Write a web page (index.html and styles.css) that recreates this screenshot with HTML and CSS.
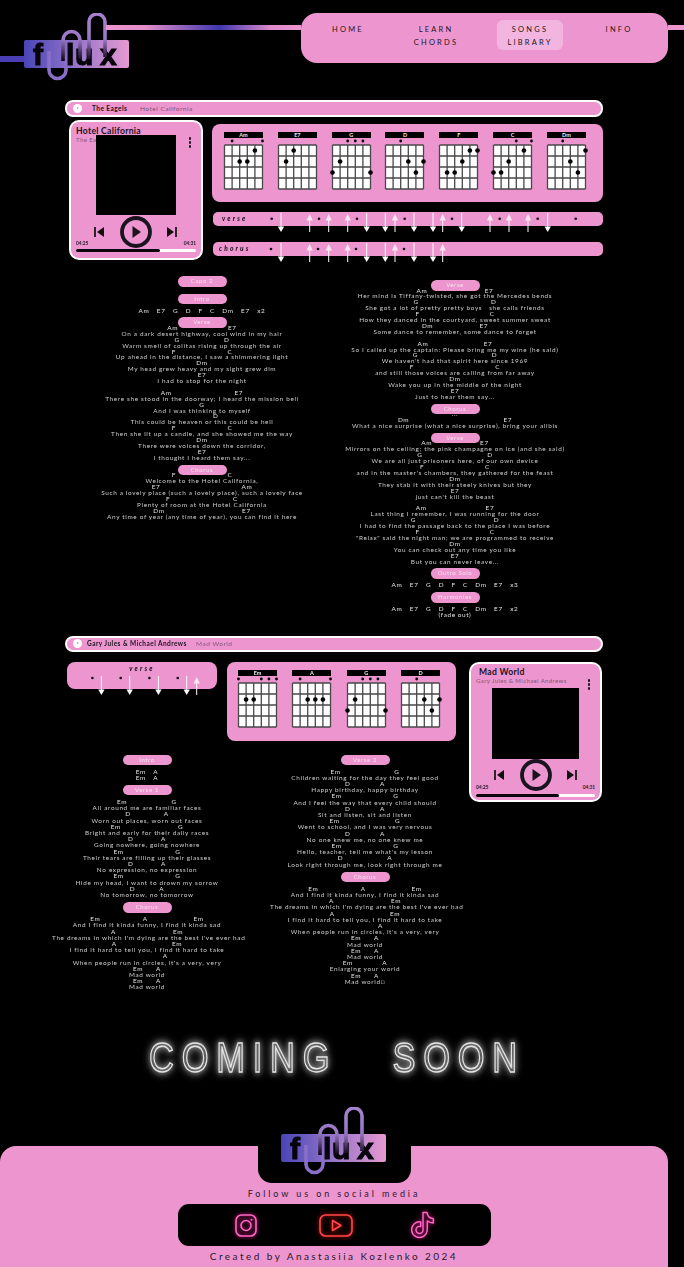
FILE: index.html
```html
<!DOCTYPE html>
<html lang="en">
<head>
<meta charset="utf-8">
<title>Flux – Songs Library</title>
<link rel="stylesheet" href="styles.css">
</head>
<body>
<svg class="sprite" aria-hidden="true">
  <defs>
    <linearGradient id="logoBg" x1="0" x2="1" y1="0" y2="0"><stop offset="0" stop-color="#4a46b8"/><stop offset=".45" stop-color="#8f72c8"/><stop offset="1" stop-color="#e79ad2"/></linearGradient>
    <linearGradient id="tube" gradientUnits="userSpaceOnUse" x1="0" x2="0" y1="0" y2="48"><stop offset="0" stop-color="#a884cf"/><stop offset=".55" stop-color="#9a78c8"/><stop offset="1" stop-color="#0c0614"/></linearGradient>
    <linearGradient id="topLine" x1="0" x2="1" y1="0" y2="0"><stop offset="0" stop-color="#ee96d0"/><stop offset=".2" stop-color="#e48fcb"/><stop offset=".58" stop-color="#4038ae"/><stop offset=".85" stop-color="#e08ccb"/><stop offset="1" stop-color="#ee96d0"/></linearGradient>
    <symbol id="logo" viewBox="0 0 106 70">
      <rect x="0" y="27" width="105" height="28" rx="2" fill="url(#logoBg)"/>
      <path d="M25 38V57a8.5 8.5 0 0 0 17 0V44" fill="none" stroke="#8b70c9" stroke-width="3.6"/>
      <g class="logo-word">
        <text x="9" y="52">f</text>
        <text x="42" y="52">l</text>
        <text x="51" y="52">u</text>
        <text x="76" y="52">x</text>
      </g>
      <path d="M39 48V27a8.5 8.5 0 0 1 17 0V46" fill="none" stroke="url(#tube)" stroke-width="3.6"/>
      <path d="M65 46V9a8 8 0 0 1 16 0V44" fill="none" stroke="url(#tube)" stroke-width="3.6"/>
    </symbol>
    <g id="fretboard">
      <rect x=".5" y="7" width="38" height="44" rx="1" fill="#fff"/>
      <path d="M.5 7H38.500M.5 18H38.500M.5 29H38.500M.5 40H38.500M.5 51H38.500M.5 7V51M8.100 7V51M15.700 7V51M23.300 7V51M30.900 7V51M38.500 7V51" fill="none" stroke="#4a4a4a" stroke-width="1.3"/>
    </g>
    <g id="down"><path d="M0 1V16" stroke="#fff" stroke-width="1"/><path d="M-3.200 14.500H3.200L0 20Z" fill="#fff"/></g>
    <g id="up"><path d="M0 20V7" stroke="#fff" stroke-width="1"/><path d="M-3.200 8.500H3.200L0 2Z" fill="#fbe6f4"/></g>
    <g id="prev"><path d="M1 1V11" stroke="#111" stroke-width="1.700"/><path d="M10 1V11L3 6Z" fill="#111"/></g>
    <g id="next"><path d="M10 1V11" stroke="#111" stroke-width="1.700"/><path d="M1 1V11L8 6Z" fill="#111"/></g>
    <g id="play"><circle cx="17" cy="16" r="14" fill="none" stroke="#1a1520" stroke-width="3.800"/><path d="M13.500 10V22L22 16Z" fill="#1a1520"/></g>
  </defs>
</svg>

<header class="header">
  <span class="stub-left"></span>
  <svg class="logo" viewBox="0 0 106 70"><use href="#logo"/></svg>
  <svg class="connector" viewBox="0 0 195 5" preserveAspectRatio="none" aria-hidden="true"><rect width="195" height="5" fill="url(#topLine)"/></svg>
  <nav class="nav">
    <a class="nav-item nav-home">Home</a>
    <a class="nav-item nav-learn">Learn<br>Chords</a>
    <a class="nav-item nav-songs">Songs<br>Library</a>
    <a class="nav-item nav-info">Info</a>
  </nav>
  <span class="stub-right"></span>
</header>

<main class="main">
  <section class="song">
    <div class="song-bar">
      <span class="bar-play"></span>
      <b class="bar-artist bar-artist--eagles">The Eagels</b>
      <span class="bar-title">Hotel California</span>
    </div>
    <div class="song-top">
      <article class="player">
        <h3 class="player-title">Hotel California</h3>
        <p class="player-sub">The Eagles</p>
        <div class="album"></div>
        <span class="kebab"><i></i><i></i><i></i></span>
        <div class="controls">
          <svg class="ctl" viewBox="0 0 12 12"><use href="#prev"/></svg>
          <svg class="ctl-play" viewBox="0 0 34 32"><use href="#play"/></svg>
          <svg class="ctl" viewBox="0 0 12 12"><use href="#next"/></svg>
        </div>
        <div class="times"><span>04:25</span><span>04:31</span></div>
        <div class="progress"><span class="progress-fill"></span></div>
      </article>
      <div class="song-side">
        <div class="chords">
          <figure class="chord"><figcaption>Am</figcaption><svg viewBox="0 0 39 58"><use href="#fretboard"/><circle class="o" cx="8.100" cy="3"/><circle class="o" cx="38.500" cy="3"/><circle class="d" cx="30.900" cy="12.500"/><circle class="d" cx="15.700" cy="23.500"/><circle class="d" cx="23.300" cy="23.500"/></svg></figure>
          <figure class="chord"><figcaption>E7</figcaption><svg viewBox="0 0 39 58"><use href="#fretboard"/><circle class="d" cx="15.700" cy="12.500"/><circle class="d" cx="8.100" cy="23.500"/></svg></figure>
          <figure class="chord"><figcaption>G</figcaption><svg viewBox="0 0 39 58"><use href="#fretboard"/><circle class="o" cx="15.700" cy="3"/><circle class="o" cx="23.300" cy="3"/><circle class="o" cx="30.900" cy="3"/><circle class="d" cx="8.100" cy="23.500"/><circle class="d" cx=".5" cy="34.500"/><circle class="d" cx="38.500" cy="34.500"/></svg></figure>
          <figure class="chord"><figcaption>D</figcaption><svg viewBox="0 0 39 58"><use href="#fretboard"/><circle class="o" cx="15.700" cy="3"/><circle class="d" cx="23.300" cy="23.500"/><circle class="d" cx="38.500" cy="23.500"/><circle class="d" cx="30.900" cy="34.500"/></svg></figure>
          <figure class="chord"><figcaption>F</figcaption><svg viewBox="0 0 39 58"><use href="#fretboard"/><circle class="d" cx="30.900" cy="12.500"/><circle class="d" cx="38.500" cy="12.500"/><circle class="d" cx="23.300" cy="23.500"/><circle class="d" cx="8.100" cy="34.500"/><circle class="d" cx="15.700" cy="34.500"/></svg></figure>
          <figure class="chord"><figcaption>C</figcaption><svg viewBox="0 0 39 58"><use href="#fretboard"/><circle class="o" cx="23.300" cy="3"/><circle class="o" cx="38.500" cy="3"/><circle class="d" cx="30.900" cy="12.500"/><circle class="d" cx="15.700" cy="23.500"/><circle class="d" cx=".5" cy="34.500"/><circle class="d" cx="8.100" cy="34.500"/></svg></figure>
          <figure class="chord"><figcaption>Dm</figcaption><svg viewBox="0 0 39 58"><use href="#fretboard"/><circle class="o" cx="15.700" cy="3"/><circle class="d" cx="38.500" cy="12.500"/><circle class="d" cx="23.300" cy="23.500"/><circle class="d" cx="30.900" cy="34.500"/></svg></figure>
        </div>
        <div class="strum strum--verse">
          <span class="strum-label">verse</span>
          <svg class="strum-marks" viewBox="0 0 340 14">
            <circle class="s" cx="8.700" cy="6.700"/><circle class="s" cx="56" cy="6.700"/><circle class="s" cx="94" cy="6.700"/><circle class="s" cx="141.700" cy="6.700"/><circle class="s" cx="189" cy="6.700"/><circle class="s" cx="236.700" cy="6.700"/><circle class="s" cx="274.700" cy="6.700"/><circle class="s" cx="312.700" cy="6.700"/>
            <use href="#down" x="18"/><use href="#down" x="103.700"/><use href="#down" x="122.300"/><use href="#down" x="151"/><use href="#down" x="170"/><use href="#down" x="198.700"/><use href="#down" x="284.700"/>
            <use href="#up" x="46.700"/><use href="#up" x="65.700"/><use href="#up" x="84.700"/><use href="#up" x="132"/><use href="#up" x="179.700"/><use href="#up" x="227"/><use href="#up" x="246"/><use href="#up" x="265"/>
          </svg>
        </div>
        <div class="strum strum--chorus">
          <span class="strum-label">chorus</span>
          <svg class="strum-marks" viewBox="0 0 340 14">
            <circle class="s" cx="8" cy="7"/><circle class="s" cx="55" cy="7"/><circle class="s" cx="93" cy="7"/><circle class="s" cx="141" cy="7"/>
            <use href="#down" x="18"/><use href="#down" x="103.700"/><use href="#down" x="122.300"/><use href="#down" x="151"/><use href="#down" x="170"/>
            <use href="#up" x="46.700"/><use href="#up" x="65.700"/><use href="#up" x="84.700"/><use href="#up" x="132"/><use href="#up" x="179.700"/>
          </svg>
        </div>
      </div>
    </div>

    <div class="lyrics lyrics--eagles">
      <div class="col col--e1">
        <p class="pill pill--capo">Capo 2</p>
        <p class="pill pill--roomy">Intro</p>
        <p class="c">Am    E7    G    D    F    C    Dm    E7    x2</p>
        <p class="pill pill--tight">Verse</p>
        <p class="c">Am                           E7</p>
        <p class="l">On a dark desert highway, cool wind in my hair</p>
        <p class="c">G                        D</p>
        <p class="l">Warm smell of colitas rising up through the air</p>
        <p class="c">F                            C</p>
        <p class="l">Up ahead in the distance, I saw a shimmering light</p>
        <p class="c">Dm</p>
        <p class="l">My head grew heavy and my sight grew dim</p>
        <p class="c">E7</p>
        <p class="l">I had to stop for the night</p>
        <p class="blank"></p>
        <p class="c">Am                                  E7</p>
        <p class="l">There she stood in the doorway; I heard the mission bell</p>
        <p class="c">G</p>
        <p class="l">And I was thinking to myself</p>
        <p class="c">               D</p>
        <p class="l">This could be heaven or this could be hell</p>
        <p class="c">F                            C</p>
        <p class="l">Then she lit up a candle, and she showed me the way</p>
        <p class="c">Dm</p>
        <p class="l">There were voices down the corridor,</p>
        <p class="c">E7</p>
        <p class="l">I thought I heard them say...</p>
        <p class="pill pill--tight">Chorus</p>
        <p class="c">F                            C</p>
        <p class="l">Welcome to the Hotel California,</p>
        <p class="c">E7                                            Am</p>
        <p class="l">Such a lovely place (such a lovely place), such a lovely face</p>
        <p class="c">F                                  C</p>
        <p class="l">Plenty of room at the Hotel California</p>
        <p class="c">Dm                                          E7</p>
        <p class="l">Any time of year (any time of year), you can find it here</p>
      </div>
      <div class="col col--e2">
        <p class="pill pill--tight">Verse</p>
        <p class="c">Am                               E7</p>
        <p class="l">Her mind is Tiffany-twisted, she got the Mercedes bends</p>
        <p class="c">G                                       D</p>
        <p class="l">She got a lot of pretty pretty boys   she calls friends</p>
        <p class="c">F                                      C</p>
        <p class="l">How they danced in the courtyard, sweet summer sweat</p>
        <p class="c">Dm                         E7</p>
        <p class="l">Some dance to remember, some dance to forget</p>
        <p class="blank"></p>
        <p class="c">Am                              E7</p>
        <p class="l">So I called up the captain: Please bring me my wine (he said)</p>
        <p class="c">G                                        D</p>
        <p class="l">We haven't had that spirit here since 1969</p>
        <p class="c">F                                            C</p>
        <p class="l">and still those voices are calling from far away</p>
        <p class="c">Dm</p>
        <p class="l">Wake you up in the middle of the night</p>
        <p class="c">E7</p>
        <p class="l">Just to hear them say...</p>
        <p class="pill pill--tight">Chorus</p>
        <p class="c">...</p>
        <p class="c">Dm                                                   E7</p>
        <p class="l">What a nice surprise (what a nice surprise), bring your alibis</p>
        <p class="pill pill--tight">Verse</p>
        <p class="c">Am                          E7</p>
        <p class="l">Mirrors on the ceiling; the pink champagne on ice (and she said)</p>
        <p class="c">G                                   D</p>
        <p class="l">We are all just prisoners here, of our own device</p>
        <p class="c">F                                 C</p>
        <p class="l">and in the master's chambers, they gathered for the feast</p>
        <p class="c">Dm</p>
        <p class="l">They stab it with their steely knives but they</p>
        <p class="c">E7</p>
        <p class="l">just can't kill the beast</p>
        <p class="blank"></p>
        <p class="c">Am                                E7</p>
        <p class="l">Last thing I remember, I was running for the door</p>
        <p class="c">G                                          D</p>
        <p class="l">I had to find the passage back to the place I was before</p>
        <p class="c">F                                      C</p>
        <p class="l">"Relax" said the night man; we are programmed to receive</p>
        <p class="c">Dm</p>
        <p class="l">You can check out any time you like</p>
        <p class="c">E7</p>
        <p class="l">But you can never leave...</p>
        <p class="pill pill--roomy">Outro Solo</p>
        <p class="c">Am    E7    G    D    F    C    Dm    E7    x3</p>
        <p class="pill pill--roomy">Harmonies</p>
        <p class="c">Am    E7    G    D    F    C    Dm    E7    x2</p>
        <p class="c">(fade out)</p>
      </div>
    </div>
  </section>

  <section class="song song--mad">
    <div class="song-bar song-bar--mad">
      <span class="bar-play"></span>
      <b class="bar-artist bar-artist--gary">Gary Jules &amp; Michael Andrews</b>
      <span class="bar-title">Mad World</span>
    </div>
    <div class="mad-row">
      <div class="mad-left">
        <div class="mad-top">
          <div class="strum-card">
            <span class="strum-label strum-label--card">verse</span>
            <svg class="strum-marks strum-marks--card" viewBox="0 0 150 15">
              <circle class="s" cx="25.400" cy="4"/><circle class="s" cx="53.700" cy="4"/><circle class="s" cx="82.400" cy="4"/><circle class="s" cx="110.700" cy="4"/>
              <use href="#down" x="34.400" y="1"/><use href="#down" x="62.700" y="1"/><use href="#down" x="91.400" y="1"/><use href="#down" x="119.700" y="1"/><use href="#up" x="129.700" y="1"/>
            </svg>
          </div>
          <div class="chords chords--mad">
            <figure class="chord"><figcaption>Em</figcaption><svg viewBox="0 0 39 58"><use href="#fretboard"/><circle class="o" cx=".5" cy="3"/><circle class="o" cx="23.300" cy="3"/><circle class="o" cx="30.900" cy="3"/><circle class="o" cx="38.500" cy="3"/><circle class="d" cx="8.100" cy="23.500"/><circle class="d" cx="15.700" cy="23.500"/></svg></figure>
            <figure class="chord"><figcaption>A</figcaption><svg viewBox="0 0 39 58"><use href="#fretboard"/><circle class="o" cx="8.100" cy="3"/><circle class="o" cx="38.500" cy="3"/><circle class="d" cx="15.700" cy="23.500"/><circle class="d" cx="23.300" cy="23.500"/><circle class="d" cx="30.900" cy="23.500"/></svg></figure>
            <figure class="chord"><figcaption>G</figcaption><svg viewBox="0 0 39 58"><use href="#fretboard"/><circle class="o" cx="15.700" cy="3"/><circle class="o" cx="23.300" cy="3"/><circle class="o" cx="30.900" cy="3"/><circle class="d" cx="8.100" cy="23.500"/><circle class="d" cx=".5" cy="34.500"/><circle class="d" cx="38.500" cy="34.500"/></svg></figure>
            <figure class="chord"><figcaption>D</figcaption><svg viewBox="0 0 39 58"><use href="#fretboard"/><circle class="o" cx="15.700" cy="3"/><circle class="d" cx="23.300" cy="23.500"/><circle class="d" cx="38.500" cy="23.500"/><circle class="d" cx="30.900" cy="34.500"/></svg></figure>
          </div>
        </div>
        <div class="lyrics lyrics--mad">
          <div class="col col--m1">
            <p class="pill pill--roomy">Intro</p>
            <p class="c">Em    A</p>
            <p class="c">Em    A</p>
            <p class="pill pill--roomy">Verse 1</p>
            <p class="c">Em                        G</p>
            <p class="l">All around me are familiar faces</p>
            <p class="c">D                  A</p>
            <p class="l">Worn out places, worn out faces</p>
            <p class="c">Em                               G</p>
            <p class="l">Bright and early for their daily races</p>
            <p class="c">D               A</p>
            <p class="l">Going nowhere, going nowhere</p>
            <p class="c">Em                            G</p>
            <p class="l">Their tears are filling up their glasses</p>
            <p class="c">D               A</p>
            <p class="l">No expression, no expression</p>
            <p class="c">Em                            G</p>
            <p class="l">Hide my head, I want to drown my sorrow</p>
            <p class="c">D             A</p>
            <p class="l">No tomorrow, no tomorrow</p>
            <p class="pill pill--roomy">Chorus</p>
            <p class="c">Em                       A                         Em</p>
            <p class="l">And I find it kinda funny, I find it kinda sad</p>
            <p class="c">A                               Em</p>
            <p class="l">The dreams in which I'm dying are the best I've ever had</p>
            <p class="c">A                              Em</p>
            <p class="l">I find it hard to tell you, I find it hard to take</p>
            <p class="c">                    A</p>
            <p class="l">When people run in circles, it's a very, very</p>
            <p class="c">Em       A</p>
            <p class="l">Mad world</p>
            <p class="c">Em       A</p>
            <p class="l">Mad world</p>
          </div>
          <div class="col col--m2">
            <p class="pill pill--roomy">Verse 2</p>
            <p class="c">Em                             G</p>
            <p class="l">Children waiting for the day they feel good</p>
            <p class="c">D                A</p>
            <p class="l">Happy birthday, happy birthday</p>
            <p class="c">Em                            G</p>
            <p class="l">And I feel the way that every child should</p>
            <p class="c">D                A</p>
            <p class="l">Sit and listen, sit and listen</p>
            <p class="c">Em                              G</p>
            <p class="l">Went to school, and I was very nervous</p>
            <p class="c">D                A</p>
            <p class="l">No one knew me, no one knew me</p>
            <p class="c">Em                            G</p>
            <p class="l">Hello, teacher, tell me what's my lesson</p>
            <p class="c">D                        A</p>
            <p class="l">Look right through me, look right through me</p>
            <p class="pill pill--roomy">Chorus</p>
            <p class="c">Em                       A                         Em</p>
            <p class="l">And I find it kinda funny, I find it kinda sad</p>
            <p class="c">A                               Em</p>
            <p class="l">The dreams in which I'm dying are the best I've ever had</p>
            <p class="c">A                              Em</p>
            <p class="l">I find it hard to tell you, I find it hard to take</p>
            <p class="c">                 A</p>
            <p class="l">When people run in circles, it's a very, very</p>
            <p class="c">Em       A</p>
            <p class="l">Mad world</p>
            <p class="c">Em       A</p>
            <p class="l">Mad world</p>
            <p class="c">Em                A</p>
            <p class="l">Enlarging your world</p>
            <p class="c">Em       A</p>
            <p class="l">Mad world&#9633;</p>
          </div>
        </div>
      </div>
      <article class="player player--mad">
        <h3 class="player-title">Mad World</h3>
        <p class="player-sub">Gary Jules &amp; Michael Andrews</p>
        <div class="album"></div>
        <span class="kebab"><i></i><i></i><i></i></span>
        <div class="controls">
          <svg class="ctl" viewBox="0 0 12 12"><use href="#prev"/></svg>
          <svg class="ctl-play" viewBox="0 0 34 32"><use href="#play"/></svg>
          <svg class="ctl" viewBox="0 0 12 12"><use href="#next"/></svg>
        </div>
        <div class="times"><span>04:25</span><span>04:31</span></div>
        <div class="progress"><span class="progress-fill"></span></div>
      </article>
    </div>
  </section>

  <h2 class="coming">COMING SOON</h2>
</main>

<footer class="footer">
  <div class="notch"><svg class="logo logo--footer" viewBox="0 0 106 70"><use href="#logo"/></svg></div>
  <p class="follow">Follow us on social media</p>
  <div class="social">
    <svg class="ic ic-insta" viewBox="0 0 24 25"><rect x="2" y="2" width="20" height="21" rx="5.500"/><circle cx="12" cy="12.500" r="5"/><circle class="ic-dot" cx="17.500" cy="6.800" r="1"/></svg>
    <svg class="ic ic-yt" viewBox="0 0 36 25"><rect x="2" y="2" width="32" height="21" rx="5.500"/><path d="M14.500 7.500V17.500L23 12.500Z"/></svg>
    <svg class="ic ic-tt" viewBox="-1 -1 26 26"><path d="M12.525.02c1.31-.02 2.61-.01 3.91-.02.08 1.53.63 3.09 1.75 4.17 1.12 1.11 2.7 1.62 4.24 1.79v4.03c-1.44-.05-2.89-.35-4.2-.97-.57-.26-1.1-.59-1.62-.93-.01 2.92.01 5.84-.02 8.75-.08 1.4-.54 2.79-1.35 3.94-1.31 1.92-3.58 3.17-5.91 3.21-1.43.08-2.86-.31-4.08-1.03-2.02-1.19-3.44-3.37-3.65-5.71-.02-.5-.03-1-.01-1.49.18-1.9 1.12-3.72 2.58-4.96 1.66-1.44 3.98-2.13 6.15-1.72.02 1.48-.04 2.96-.04 4.44-.99-.32-2.15-.23-3.02.37-.63.41-1.11 1.04-1.36 1.75-.21.51-.15 1.07-.14 1.61.24 1.64 1.82 3.02 3.5 2.87 1.12-.01 2.19-.66 2.77-1.61.19-.33.4-.67.41-1.06.1-1.79.06-3.57.07-5.36.01-4.03-.01-8.05.02-12.07z"/></svg>
  </div>
  <p class="credit">Created by Anastasiia Kozlenko 2024</p>
</footer>
</body>
</html>
```
FILE: styles.css
```css
* { box-sizing: border-box; margin: 0; padding: 0; }
:root { --pink: #ee96d0; --ink: #1b1420; --mute: #7d5a78; }
html, body { background: #000; }
body { width: 684px; height: 1267px; overflow: hidden; font-family: Lato, "Noto Sans", sans-serif; color: #ddd; }
.sprite { position: absolute; width: 0; height: 0; }

/* header */
.header { display: flex; align-items: flex-start; height: 100px; padding-top: 13px; opacity: .999; }
.stub-left { flex: none; width: 26px; height: 6px; margin-top: 43px; background: #4a3fb5; }
.logo { flex: none; width: 106px; height: 70px; margin-left: -2px; overflow: visible; }
.logo-word { font-family: "Liberation Sans", sans-serif; font-weight: 700; font-size: 30px; fill: #08040c; stroke: #08040c; stroke-width: 1.1px; }
.connector { flex: none; width: 195px; height: 5px; margin: 12px 0 0 -24px; }
.nav { flex: none; display: flex; width: 367px; height: 50px; padding-top: 7px; margin-left: 0; background: var(--pink); border-radius: 16px; }
.nav-item { display: block; height: 30px; padding-top: 3px; text-align: center; text-transform: uppercase; font-size: 7.5px; line-height: 13px; letter-spacing: 2.2px; color: #1e1620; }
.nav-home { width: 94px; }
.nav-learn { width: 82px; }
.nav-songs { width: 66px; margin-left: 20px; background: #f3b6e0; border-radius: 6px; }
.nav-info { width: 52px; margin-left: 30px; }
.stub-right { flex: none; width: 16px; height: 5px; margin-top: 12px; background: var(--pink); }

/* song */
.main { padding-left: 65px; opacity: .999; }
.song { width: 538px; }
.song-bar { display: flex; align-items: center; height: 16.5px; background: var(--pink); border: 2px solid #fff; border-radius: 8px; font-size: 6.5px; letter-spacing: .45px; }
.song-bar--mad { height: 15.5px; }
.bar-play { flex: none; width: 9px; height: 9px; margin-left: 6px; border-radius: 50%; background: #fff; position: relative; }
.bar-play::after { content: ""; position: absolute; left: 3.5px; top: 3px; border-left: 2.5px solid #b08aa8; border-top: 1.5px solid transparent; border-bottom: 1.5px solid transparent; }
.bar-artist { flex: none; color: var(--ink); font-weight: 700; }
.bar-artist--eagles { width: 48px; margin-left: 10px; }
.bar-artist--gary { width: 109px; margin-left: 5px; }
.bar-title { color: var(--mute); letter-spacing: .5px; }
.song-top { display: flex; margin-top: 3.5px; }

/* player */
.player { flex: none; position: relative; width: 134px; height: 140px; margin-left: 4px; padding: 4.5px 5px 0; background: var(--pink); border: 2px solid #fff; border-radius: 10px; }
.player-title { font-size: 8.6px; line-height: 9px; font-weight: 700; letter-spacing: .3px; color: var(--ink); }
.player-sub { font-size: 6px; line-height: 7px; letter-spacing: .4px; color: var(--mute); white-space: nowrap; }
.album { width: 80px; height: 80px; margin: -7.5px auto 0; background: #000; position: relative; }
.kebab { position: absolute; right: 10px; top: 15px; display: flex; flex-direction: column; gap: 1.5px; }
.kebab i { display: block; width: 2.5px; height: 2.5px; border-radius: 50%; background: var(--ink); }
.controls { display: flex; justify-content: center; align-items: center; gap: 13px; margin-top: 1.5px; height: 31px; }
.ctl { width: 12px; height: 12px; }
.ctl-play { width: 34px; height: 32px; }
.times { display: flex; justify-content: space-between; margin-top: -7.5px; font-size: 4.8px; line-height: 7px; font-weight: 700; color: #2a1a2a; }
.progress { height: 3px; margin-top: 2px; background: #fff; border-radius: 2px; }
.progress-fill { display: block; width: 70%; height: 100%; background: #0c080e; border-radius: 2px; }

.player--mad { width: 133px; height: 139.6px; margin-left: 0; padding-top: 3.8px; }
.player--mad .player-title { padding-left: 3px; }
.player--mad .album { width: 87px; height: 71px; margin-top: 3.8px; }
.player--mad .kebab { top: 15px; }
.player--mad .controls { margin-top: .5px; }
.player--mad .times { margin-top: -6.5px; }
.player--mad .progress { margin-top: 3px; }

/* chord panels */
.song-side { flex: none; width: 391px; margin-left: 9px; padding-top: 4px; }
.chords { display: flex; justify-content: space-between; height: 78px; padding: 8px 17px 0 12px; background: var(--pink); border-radius: 8px; }
.chords--mad { width: 229px; height: 78.4px; padding: 8px 16px 0 11px; margin-left: 10px; }
.chord { width: 39px; }
.chord figcaption { height: 6px; background: #000; color: #eee; text-align: center; font-size: 5.5px; line-height: 6px; font-weight: 700; }
.chord svg { display: block; width: 39px; height: 58px; overflow: visible; }
.d { r: 2.3px; fill: #000; }
.o { r: 1.4px; fill: #000; }
.s { r: 1.3px; fill: #0c080e; }

/* strumming */
.strum { display: flex; height: 14px; background: var(--pink); border-radius: 5px; }
.strum--verse { margin: 10px 0 0 1px; }
.strum--chorus { margin: 16px 0 0 1px; }
.strum-label { flex: none; width: 50px; padding-left: 9px; font-size: 6.5px; line-height: 13px; font-weight: 900; font-style: italic; letter-spacing: 2.2px; color: var(--ink); }
.strum--chorus .strum-label { padding-left: 6px; }
.strum-marks { flex: none; width: 340px; height: 14px; overflow: visible; }
.strum-card { flex: none; width: 150px; height: 27px; margin-left: 2px; background: var(--pink); border-radius: 8px; }
.strum-label--card { display: block; width: auto; padding: 0; height: 12px; text-align: center; line-height: 14px; }
.strum-marks--card { display: block; width: 150px; height: 15px; }

/* lyrics */
.lyrics { display: flex; margin-top: 12px; line-height: 5.9px; font-size: 6.4px; letter-spacing: .66px; text-align: center; }
.col { flex: none; }
.col--e1 { width: 274px; }
.col--e2 { width: 232px; padding-top: 4px; }
.c { white-space: pre; word-spacing: -.45px; color: #e4e4e4; min-height: 5.9px; }
.l { white-space: pre; color: #cfcfcf; }
.blank { height: 5.9px; }
.pill { width: 49px; height: 10.5px; margin: 4px auto 0; background: var(--pink); border-radius: 6px; font-size: 6px; line-height: 10.5px; color: #f9e2f1; letter-spacing: .6px; }
.pill--capo { margin-bottom: 7px; }
.pill--capo + .pill { margin-top: 0; }
.pill--tight { margin-bottom: -3px; position: relative; }
.pill--roomy { margin-bottom: 3.5px; }

/* mad world */
.song--mad { margin-top: 18px; }
.mad-row { display: flex; margin-top: 10.5px; }
.mad-left { flex: none; width: 404px; }
.mad-top { display: flex; align-items: flex-start; }
.lyrics--mad { margin: 10px 0 0 -13px; line-height: 6.2px; }
.col--m1 { width: 190px; }
.col--m2 { width: 190px; margin-left: 28px; }

/* coming soon */
.coming { width: 538px; margin: 46.5px 0 0 3px; text-align: center; font-family: "Liberation Sans", sans-serif; font-weight: 400; font-size: 42px; line-height: 42px; letter-spacing: 9.5px; word-spacing: 46px; color: transparent; -webkit-text-stroke: 1.4px #e6e6e6; filter: drop-shadow(0 0 3px rgba(255,255,255,.85)) drop-shadow(0 0 5px rgba(255,255,255,.45)); white-space: nowrap; transform: scaleX(.82); }

/* footer */
.footer { position: absolute; left: 0; top: 1146px; display: flex; flex-direction: column; align-items: center; width: 668px; height: 121px; background: var(--pink); border-radius: 16px 16px 0 0; opacity: .999; }
.notch { display: flex; justify-content: center; flex: none; width: 153px; height: 37px; background: #000; border-radius: 0 0 14px 14px; }
.logo--footer { margin: -39px 0 0 0; }
.follow { margin-top: 5px; font-size: 9px; line-height: 12px; letter-spacing: 2.9px; color: #2a1a2a; }
.social { display: flex; align-items: center; width: 313px; height: 42px; margin-top: 4px; padding-left: 56px; background: #000; border-radius: 11px; }
.ic { fill: none; stroke-linejoin: round; }
.ic-insta { width: 24px; height: 25px; stroke: #ff6ac4; stroke-width: 1.6; filter: drop-shadow(0 0 2px #ff1f9f); }
.ic-dot { fill: #ff6ac4; stroke: none; }
.ic-yt { width: 36px; height: 25px; margin: 0 55px 0 60px; stroke: #ff4a4a; stroke-width: 1.6; filter: drop-shadow(0 0 2px #ff1212); }
.ic-tt { width: 27px; height: 30px; stroke: #ff6ac4; stroke-width: 1.4; filter: drop-shadow(0 0 2px #ff1f9f); }
.credit { margin-top: 4px; font-size: 10px; line-height: 12px; letter-spacing: 2.45px; color: #2a1a2a; }
```
